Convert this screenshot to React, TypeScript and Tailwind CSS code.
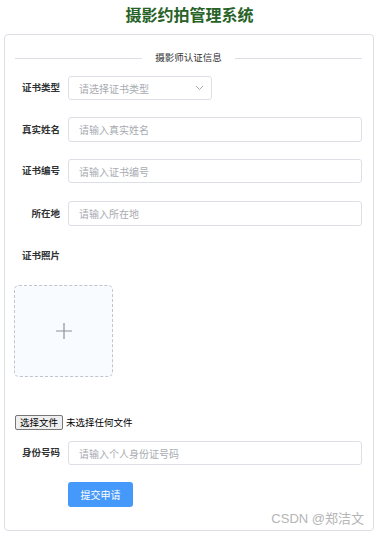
import React from "react";

const font = { fontFamily: '"Noto Sans CJK SC", "Liberation Sans", sans-serif' };

function Row({ label, children, mt, h }: { label: string; children: React.ReactNode; mt: string; h: string }) {
  return (
    <div className={`flex items-center ${mt} ${h}`}>
      <div className="w-[55px] text-right text-[9.5px] font-bold text-[#303133] leading-none shrink-0">{label}</div>
      <div className="ml-[8px] h-full flex">{children}</div>
    </div>
  );
}

function TextInput({ placeholder }: { placeholder: string }) {
  return (
    <input
      readOnly
      placeholder={placeholder}
      className="w-[294px] h-full border border-[#dcdfe6] rounded-[3px] pl-[10px] text-[10px] outline-none bg-white placeholder:text-[#a8abb2]"
      style={font}
    />
  );
}

export default function App() {
  return (
    <div className="w-[379px] h-[533px] bg-white relative" style={font}>
      <div className="pt-[5px] text-center text-[16px] leading-[18px] font-bold text-[#276227]">摄影约拍管理系统</div>
      <div className="mt-[11px] ml-[4px] w-[370px] h-[497px] border border-[#dcdfe6] rounded-[4px] relative">
        <div className="mt-[18px] h-[10px] flex items-center ml-[10px] w-[347px]">
          <div className="flex-1 h-px bg-[#dcdfe6]"></div>
          <div className="px-[13px] text-[9.5px] text-[#303133] leading-none">摄影师认证信息</div>
          <div className="flex-1 h-px bg-[#dcdfe6]"></div>
        </div>
        <Row label="证书类型" mt="mt-[13px]" h="h-[24px]">
          <div className="w-[144px] h-full border border-[#dcdfe6] rounded-[3px] pl-[10px] pr-[7px] flex items-center justify-between">
            <span className="text-[10px] text-[#a8abb2]">请选择证书类型</span>
            <svg width="9" height="6" viewBox="0 0 9 6" fill="none">
              <path d="M1 1l3.5 3.5L8 1" stroke="#a8abb2" strokeWidth="1" />
            </svg>
          </div>
        </Row>
        <Row label="真实姓名" mt="mt-[17px]" h="h-[25px]">
          <TextInput placeholder="请输入真实姓名" />
        </Row>
        <Row label="证书编号" mt="mt-[17px]" h="h-[24px]">
          <TextInput placeholder="请输入证书编号" />
        </Row>
        <Row label="所在地" mt="mt-[18px]" h="h-[25px]">
          <TextInput placeholder="请输入所在地" />
        </Row>
        <div className="mt-[23px] h-[14px] flex items-center">
          <div className="w-[55px] text-right text-[9.5px] font-bold text-[#303133] leading-none">证书照片</div>
        </div>
        <div className="mt-[22px] ml-[9px] w-[99px] h-[92px] border border-dashed border-[#c0c4cc] rounded-[5px] bg-[#f8fbff] flex items-center justify-center">
          <svg width="16" height="16" viewBox="0 0 16 16">
            <path d="M8 0v16M0 8h16" stroke="#8c939d" strokeWidth="1.2" />
          </svg>
        </div>
        <div className="mt-[38px] ml-[10px] h-[15px] flex items-center">
          <div className="h-[15px] w-[48px] border border-[#767676] rounded-[2px] bg-[#efefef] text-[9.5px] leading-[13px] text-black text-center">选择文件</div>
          <span className="ml-[3px] text-[9.5px] text-black leading-none">未选择任何文件</span>
        </div>
        <Row label="身份号码" mt="mt-[11px]" h="h-[24px]">
          <TextInput placeholder="请输入个人身份证号码" />
        </Row>
        <div className="mt-[17px] ml-[63px] w-[65px] h-[25px] rounded-[3px] bg-[#4599fa] text-white text-[10px] flex items-center justify-center">提交申请</div>
        <div className="absolute right-[9px] bottom-[5px] text-[13px] leading-none text-[#b5b5b5]" style={{ fontFamily: '"Liberation Sans", "Noto Sans CJK SC", sans-serif' }}>CSDN @郑洁文</div>
      </div>
    </div>
  );
}
